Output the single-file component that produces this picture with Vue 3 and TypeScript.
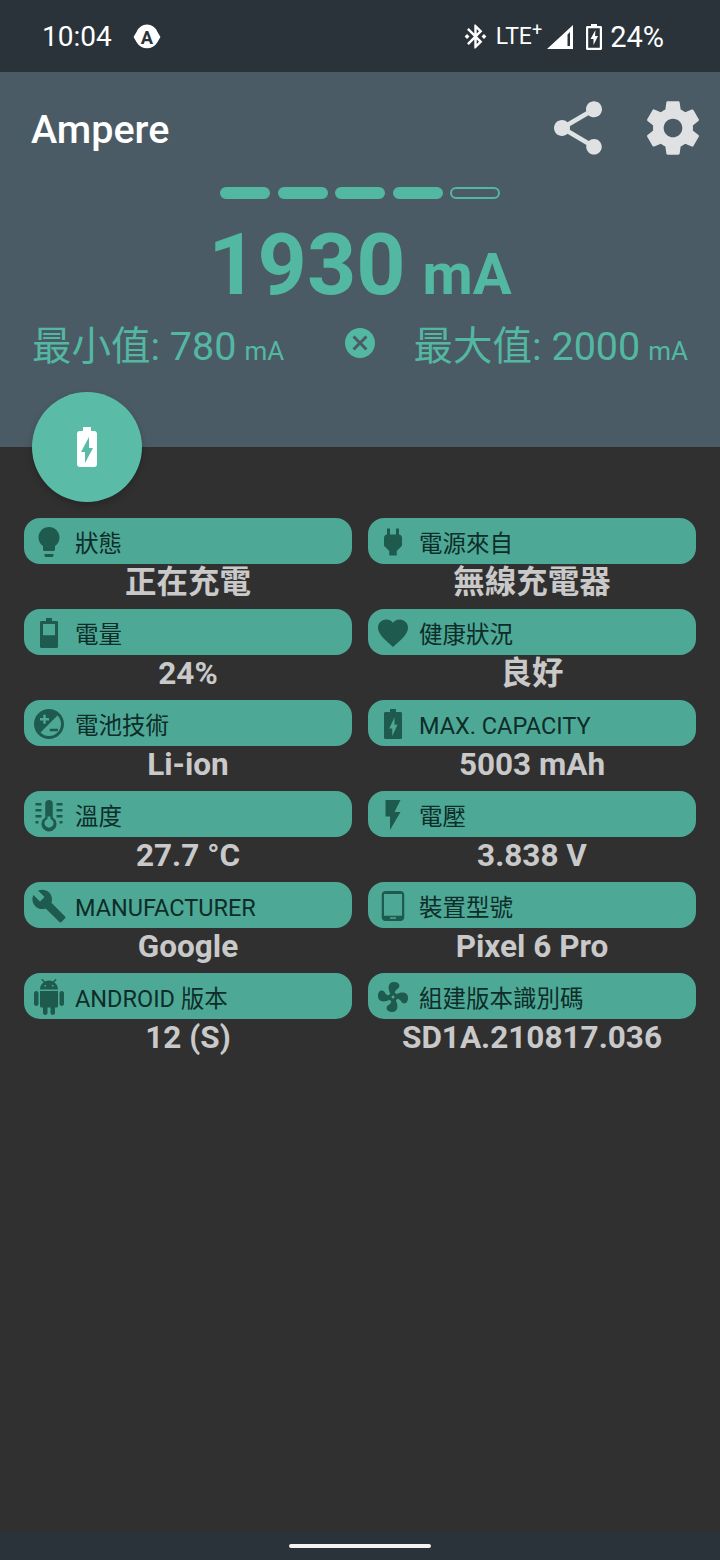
<script setup lang="ts">
interface InfoItem {
  label: string;
  value: string;
  icon: string;
}

const pills = [true, true, true, true, false];

const iconBattery = 'M10 2h4v2h3c.6 0 1 .4 1 1v16c0 .6-.4 1-1 1H7c-.6 0-1-.4-1-1V5c0-.6.4-1 1-1h3z';

const items: InfoItem[] = [
  {
    label: '狀態',
    value: '正在充電',
    icon: 'M9 21c0 .55.45 1 1 1h4c.55 0 1-.45 1-1v-1H9v1zm3-19C8.14 2 5 5.14 5 9c0 2.38 1.19 4.47 3 5.74V17c0 .55.45 1 1 1h6c.55 0 1-.45 1-1v-2.26c1.81-1.27 3-3.36 3-5.74 0-3.86-3.14-7-7-7z',
  },
  {
    label: '電源來自',
    value: '無線充電器',
    icon: 'M16.01 7L16 3h-2v4h-4V3H8v4h-.01C7 6.99 6 7.99 6 8.99v5.49L9.5 18v3h5v-3l3.5-3.51v-5.5c0-1-1-2-1.99-1.99z',
  },
  {
    label: '電量',
    value: '24%',
    icon: iconBattery + 'M8 6v7.5h8V6z',
  },
  {
    label: '健康狀況',
    value: '良好',
    icon: 'M12 21.35l-1.45-1.32C5.4 15.36 2 12.28 2 8.5 2 5.42 4.42 3 7.5 3c1.74 0 3.41.81 4.5 2.09C13.09 3.81 14.76 3 16.5 3 19.58 3 22 5.42 22 8.5c0 3.78-3.4 6.86-8.55 11.54L12 21.35z',
  },
  {
    label: '電池技術',
    value: 'Li-ion',
    icon: 'M12 2C6.48 2 2 6.48 2 12s4.48 10 10 10 10-4.48 10-10S17.52 2 12 2zM6.34 17.66A8 8 0 0 0 17.66 6.34zM6 8h2.2V5.8h1.6V8H12v1.6H9.8v2.2H8.2V9.6H6zM12.5 15.2H18v1.6h-5.500z',
  },
  {
    label: 'MAX. CAPACITY',
    value: '5003 mAh',
    icon: iconBattery + 'M13 7.500l-3.500 7.500h2V20l3.500-7.500h-2z',
  },
  {
    label: '溫度',
    value: '27.7 °C',
    icon: 'M12 2a2.500 2.500 0 0 1 2.500 2.500v9.200a5 5 0 1 1-5 0V4.500A2.500 2.500 0 0 1 12 2zM11 14.600a3 3 0 1 0 2 0V13h-2zM3 4h4v1.600H3zM3 8h4v1.600H3zM3 12h4v1.600H3zM3 16h2v1.600H3zM17 4h4v1.600h-4zM17 8h4v1.600h-4zM17 12h4v1.600h-4zM19 16h2v1.600h-2z',
  },
  {
    label: '電壓',
    value: '3.838 V',
    icon: 'M7 2v11h3v9l7-12h-4l4-8z',
  },
  {
    label: 'MANUFACTURER',
    value: 'Google',
    icon: 'M22.7 19l-9.100-9.100c.9-2.300.4-5-1.500-6.900-2-2-5-2.400-7.400-1.300L9 6 6 9 1.600 4.700C.4 7.100.9 10.100 2.900 12.100c1.900 1.900 4.600 2.400 6.900 1.500l9.100 9.100c.4.4 1 .4 1.400 0l2.300-2.300c.5-.4.5-1.100.1-1.400z',
  },
  {
    label: '裝置型號',
    value: 'Pixel 6 Pro',
    icon: 'M7 2h10c1.400 0 2.500 1.100 2.500 2.500v15c0 1.400-1.100 2.500-2.500 2.500H7c-1.400 0-2.500-1.100-2.500-2.500v-15C4.500 3.100 5.600 2 7 2zM6 4v14.500h12V4zM10 19.500v1h4v-1z',
  },
  {
    label: 'ANDROID 版本',
    value: '12 (S)',
    icon: 'M6 18c0 .55.45 1 1 1h1v3.500c0 .83.67 1.500 1.500 1.500s1.500-.67 1.500-1.500V19h2v3.500c0 .83.67 1.500 1.500 1.500s1.500-.67 1.500-1.500V19h1c.55 0 1-.45 1-1V8H6v10zM3.500 8C2.670 8 2 8.670 2 9.500v7c0 .83.67 1.500 1.500 1.500S5 17.330 5 16.500v-7C5 8.670 4.330 8 3.500 8zm17 0c-.83 0-1.500.67-1.500 1.500v7c0 .83.67 1.500 1.500 1.500s1.500-.67 1.500-1.500v-7c0-.83-.67-1.500-1.500-1.500zm-4.970-5.840l1.300-1.300c.2-.2.2-.51 0-.71-.2-.2-.51-.2-.71 0l-1.480 1.480C13.850 1.230 12.950 1 12 1c-.96 0-1.860.23-2.660.63L7.850.15c-.2-.2-.51-.2-.71 0-.2.2-.2.51 0 .71l1.310 1.310C6.970 3.260 6 5.010 6 7h12c0-1.990-.97-3.750-2.470-4.840zM10 5H9V4h1v1zm5 0h-1V4h1v1z',
  },
  {
    label: '組建版本識別碼',
    value: 'SD1A.210817.036',
    icon: 'M12 11a1 1 0 0 0-1 1 1 1 0 0 0 1 1 1 1 0 0 0 1-1 1 1 0 0 0-1-1M12.500 2C17 2 17.110 5.570 14.750 6.750c-.99.49-1.430 1.540-1.620 2.470.48.2.9.51 1.220.91 3.700-2 7.680-1.210 7.680 2.370 0 4.500-3.570 4.600-4.750 2.230-.5-.99-1.560-1.430-2.490-1.620-.2.48-.51.89-.91 1.230 1.990 3.690 1.200 7.660-2.380 7.660-4.500 0-4.590-3.580-2.230-4.760.98-.49 1.420-1.530 1.620-2.450-.49-.2-.92-.52-1.240-.92C5.960 15.850 2 15.070 2 11.500c0-4.500 3.560-4.610 4.740-2.240.5.99 1.550 1.420 2.480 1.610.19-.48.51-.9.92-1.220C8.150 5.960 8.940 2 12.500 2z',
  },
];
</script>

<template>
  <div class="page">
    <div class="status-bar">
      <div class="status-left">
        <span class="clock">10:04</span>
        <svg class="auto-icon" viewBox="0 0 26 26">
          <path d="M13 1.500a11 11 0 0 1 9.500 6.500L25.500 13l-3 5a11 11 0 0 1-19 0l-3-5 3-5A11 11 0 0 1 13 1.500z" fill="#fff" />
          <text x="13" y="19.500" text-anchor="middle" class="auto-letter">A</text>
        </svg>
      </div>
      <div class="status-right">
        <svg class="bt" viewBox="0 0 24 24" fill="#fff">
          <path d="M7 12l-2-2-2 2 2 2 2-2zm10.710-4.290L12 2h-1v7.590L6.410 5 5 6.410 10.590 12 5 17.590 6.410 19 11 14.410V22h1l5.710-5.710-4.300-4.290 4.300-4.290zM13 5.830l1.880 1.880L13 9.590V5.830zm1.880 10.460L13 18.170v-3.760l1.880 1.880zM19 10l-2 2 2 2 2-2-2-2z" />
        </svg>
        <span class="lte">LTE<sup>+</sup></span>
        <svg class="signal" viewBox="0 0 26 24" fill="#fff" fill-rule="evenodd">
          <path d="M0 24L26 0v24zM20.500 9.500L23 7v14h-2.500z" />
        </svg>
        <svg class="charge" viewBox="0 0 18 26" fill="#fff" fill-rule="evenodd">
          <path d="M6 0h6v2h3.500c1 0 1.500.6 1.500 1.500v21c0 .9-.6 1.500-1.500 1.500h-13C1.600 26 1 25.400 1 24.500v-21C1 2.600 1.600 2 2.500 2H6zM3.200 4.200v19.600h11.600V4.200zM10.500 6L5.500 15h3v6l4.500-9h-3z" />
        </svg>
        <span class="percent">24%</span>
      </div>
    </div>

    <header class="header">
      <div class="toolbar">
        <span class="title">Ampere</span>
        <div class="actions">
          <svg class="action" viewBox="0 0 24 24" fill="#dfe1e3">
            <path d="M18 16.080c-.76 0-1.440.3-1.960.77L8.910 12.700c.05-.23.09-.46.09-.7s-.04-.47-.09-.7l7.050-4.110c.54.5 1.250.81 2.040.81 1.660 0 3-1.340 3-3s-1.340-3-3-3-3 1.340-3 3c0 .24.04.47.09.7L8.040 9.810C7.500 9.310 6.790 9 6 9c-1.660 0-3 1.340-3 3s1.340 3 3 3c.79 0 1.500-.31 2.040-.81l7.120 4.160c-.05.21-.08.43-.08.65 0 1.610 1.310 2.920 2.920 2.920s2.920-1.310 2.920-2.920-1.310-2.920-2.920-2.920z" />
          </svg>
          <svg class="action" viewBox="0 0 24 24" fill="#dfe1e3">
            <path d="M19.430 12.980c.04-.32.07-.64.07-.98s-.03-.66-.07-.98l2.110-1.650c.19-.15.24-.42.12-.64l-2-3.460c-.12-.22-.39-.3-.61-.22l-2.490 1c-.52-.4-1.080-.73-1.690-.98l-.38-2.650C14.460 2.180 14.250 2 14 2h-4c-.25 0-.46.18-.49.42l-.38 2.650c-.61.25-1.170.59-1.690.98l-2.490-1c-.23-.09-.49 0-.61.22l-2 3.460c-.13.22-.07.49.12.64l2.110 1.650c-.04.32-.07.65-.07.98s.03.66.07.98l-2.110 1.650c-.19.15-.24.42-.12.64l2 3.460c.12.22.39.3.61.22l2.490-1c.52.4 1.080.73 1.690.98l.38 2.650c.03.24.24.42.49.42h4c.25 0 .46-.18.49-.42l.38-2.650c.61-.25 1.170-.59 1.690-.98l2.490 1c.23.09.49 0 .61-.22l2-3.460c.12-.22.07-.49-.12-.64l-2.110-1.650zM12 15.500c-1.930 0-3.500-1.570-3.500-3.500s1.570-3.500 3.500-3.500 3.500 1.570 3.500 3.500-1.570 3.500-3.500 3.500z" />
          </svg>
        </div>
      </div>

      <div class="pills">
        <span v-for="(on, i) in pills" :key="i" class="pill" :class="{ on }"></span>
      </div>

      <div class="current">
        <span class="current-value">1930</span>
        <span class="current-unit">mA</span>
      </div>

      <div class="range">
        <span class="range-item">最小值: 780<small>mA</small></span>
        <svg class="reset" viewBox="0 0 24 24" fill="#53b8a2">
          <path d="M12 2C6.470 2 2 6.470 2 12s4.470 10 10 10 10-4.470 10-10S17.530 2 12 2zm5 13.590L15.590 17 12 13.410 8.410 17 7 15.590 10.590 12 7 8.410 8.410 7 12 10.590 15.590 7 17 8.410 13.410 12 17 15.590z" />
        </svg>
        <span class="range-item max">最大值: 2000<small>mA</small></span>
      </div>

      <div class="fab">
        <svg viewBox="0 0 24 24" fill="#fff">
          <path d="M15.670 4H14V2h-4v2H8.330C7.600 4 7 4.600 7 5.330v15.330C7 21.400 7.600 22 8.330 22h7.330c.74 0 1.340-.6 1.340-1.330V5.330C17 4.600 16.400 4 15.670 4zM11 20v-5.500H9L13 7v5.500h2L11 20z" />
        </svg>
      </div>
    </header>

    <main class="content">
      <div v-for="item in items" :key="item.label" class="cell">
        <div class="card">
          <svg class="card-icon" viewBox="0 0 24 24">
            <path :d="item.icon" fill-rule="evenodd" />
          </svg>
          <span class="card-label">{{ item.label }}</span>
        </div>
        <div class="cell-value">{{ item.value }}</div>
      </div>
    </main>

    <div class="nav-bar">
      <span class="nav-handle"></span>
    </div>
  </div>
</template>

<style>
html,
body {
  margin: 0;
  background: #303030;
}
</style>

<style scoped>
.page {
  display: flex;
  flex-direction: column;
  width: 720px;
  height: 1560px;
  overflow: hidden;
  font-family: Roboto, "Noto Sans CJK TC", sans-serif;
  background: #303030;
}

.status-bar {
  display: flex;
  align-items: center;
  justify-content: space-between;
  height: 72px;
  padding: 1px 56px 0 42px;
  box-sizing: border-box;
  background: #2a3339;
  color: #fff;
}

.status-left,
.status-right {
  display: flex;
  align-items: center;
}

.clock {
  font-size: 28px;
}

.auto-icon {
  width: 28px;
  height: 28px;
  margin-left: 21px;
}

.auto-letter {
  font-family: Roboto, sans-serif;
  font-size: 17px;
  font-weight: 700;
  fill: #2a3339;
}

.bt {
  width: 29px;
  height: 29px;
}

.lte {
  margin-left: 6px;
  font-size: 23px;
  font-weight: 400;
}

.lte sup {
  font-size: 18px;
  line-height: 0;
  vertical-align: 8px;
}

.signal {
  width: 26px;
  height: 24px;
  margin-left: 5px;
}

.charge {
  width: 18px;
  height: 26px;
  margin-left: 12px;
}

.percent {
  margin-left: 7px;
  font-size: 29px;
}

.header {
  position: relative;
  height: 375px;
  box-sizing: border-box;
  padding-top: 26px;
  background: #4b5b65;
}

.toolbar {
  display: flex;
  align-items: center;
  justify-content: space-between;
  height: 60px;
  padding: 0 15px 0 31px;
}

.title {
  padding-top: 2px;
  font-size: 39.500px;
  font-weight: 500;
  color: #fff;
}

.actions {
  display: flex;
  gap: 31px;
}

.action {
  width: 64px;
  height: 64px;
}

.pills {
  display: flex;
  justify-content: center;
  gap: 7.500px;
  margin-top: 29px;
}

.pill {
  width: 50px;
  height: 12px;
  box-sizing: border-box;
  border: 2px solid #53b8a2;
  border-radius: 6px;
}

.pill.on {
  background: #53b8a2;
}

.current {
  display: flex;
  align-items: baseline;
  justify-content: center;
  gap: 17px;
  height: 100px;
  margin-top: 16px;
  line-height: 100px;
  color: #53b8a2;
  font-weight: 700;
}

.current-value {
  font-size: 86px;
}

.current-unit {
  font-size: 58px;
}

.range {
  display: flex;
  align-items: center;
  margin-top: -1px;
  padding: 0 32px;
  color: #53b8a2;
}

.range-item {
  font-size: 39.500px;
  font-weight: 400;
  white-space: nowrap;
}

.range-item small {
  margin-left: 8px;
  font-size: 26px;
}

.reset {
  width: 36px;
  height: 36px;
  margin-left: 58px;
}

.range-item.max {
  margin-left: auto;
}

.fab {
  position: absolute;
  left: 32px;
  top: 320px;
  display: flex;
  align-items: center;
  justify-content: center;
  width: 110px;
  height: 110px;
  border-radius: 50%;
  background: #5abca6;
  box-shadow: 0 3px 7px rgba(0, 0, 0, 0.22);
}

.fab svg {
  width: 48px;
  height: 48px;
}

.content {
  flex: 1;
  display: grid;
  grid-template-columns: 328px 328px;
  grid-auto-rows: 91px;
  column-gap: 16px;
  align-content: start;
  padding: 71px 24px 0;
}

.cell {
  display: flex;
  flex-direction: column;
}

.card {
  display: flex;
  align-items: center;
  height: 46px;
  border-radius: 16px;
  background: #4da896;
}

.card-icon {
  flex: none;
  width: 36px;
  height: 36px;
  margin-left: 7px;
  margin-top: 2px;
  fill: #1f5a4e;
}

.card-label {
  height: 46px;
  margin-left: 8px;
  padding-top: 3px;
  box-sizing: border-box;
  line-height: 46px;
  font-size: 23.500px;
  color: #0e2c28;
  white-space: nowrap;
}

.cell-value {
  height: 45px;
  line-height: 37px;
  text-align: center;
  font-size: 31.500px;
  font-weight: 700;
  color: #c9c9c9;
  white-space: nowrap;
}

.nav-bar {
  display: flex;
  justify-content: center;
  height: 28px;
  padding-top: 12px;
  box-sizing: border-box;
  background: #2a3339;
}

.nav-handle {
  width: 142px;
  height: 4px;
  border-radius: 2px;
  background: #f4f4f4;
}
</style>
